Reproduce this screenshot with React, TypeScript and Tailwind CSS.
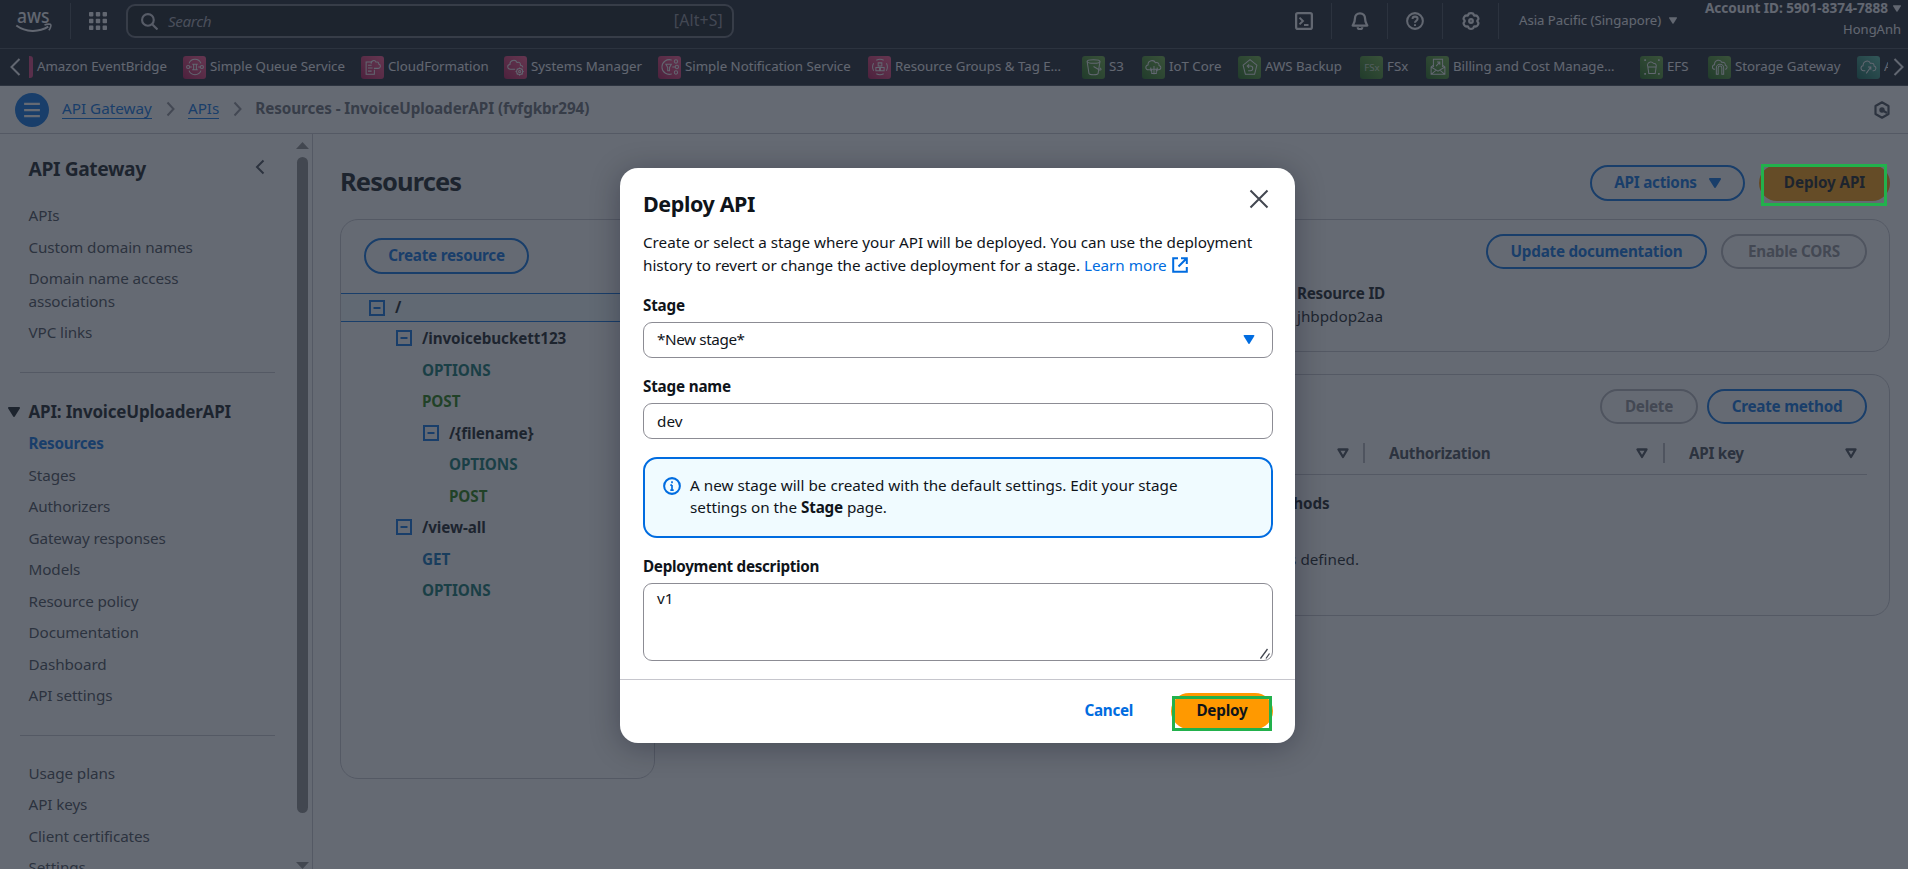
import type { ReactNode } from 'react'

type IconProps = { className: string; children: ReactNode; box?: string; width?: number }

function Icon({ className, children, box = '0 0 16 16', width = 2 }: IconProps) {
  return (
    <svg
      className={`shrink-0 ${className}`}
      viewBox={box}
      fill="none"
      stroke="currentColor"
      strokeWidth={width}
    >
      {children}
    </svg>
  )
}

function Caret({ className }: { className: string }) {
  return (
    <svg className={`shrink-0 ${className}`} viewBox="0 0 12 10" fill="currentColor">
      <path d="M1 0h10a1 1 0 0 1 .8 1.5l-5 8a1 1 0 0 1-1.6 0l-5-8A1 1 0 0 1 1 0Z" />
    </svg>
  )
}

function SortCaret() {
  return (
    <Icon className="h-[11px] w-3 text-[#424650]" box="0 0 12 11" width={2.3}>
      <path d="M1.5 1.500h9L6 9 1.500 1.500Z" strokeLinejoin="round" />
    </Icon>
  )
}

const pink = 'from-[#b0084d] to-[#ff4f8b]'
const green = 'from-[#1b660f] to-[#6cae3e]'
const teal = 'from-[#055f4e] to-[#56c0a7]'

type Service = { name: string; tint: string; width: string; glyph: ReactNode }

const services: Service[] = [
  {
    name: 'Simple Queue Service',
    tint: pink,
    width: 'w-[151px]',
    glyph: (
      <>
        <path d="M5.5 8a7 7 0 0 1 13 0M5.5 16a7 7 0 0 0 13 0" />
        <circle cx="4.5" cy="12" r="1.7" />
        <circle cx="19.5" cy="12" r="1.7" />
        <path d="M9 9h6M9 15h6M10.5 9v6M13.5 9v6M6.5 12h2M15.5 12h2" />
      </>
    ),
  },
  {
    name: 'CloudFormation',
    tint: pink,
    width: 'w-[116px]',
    glyph: (
      <>
        <path d="M11 6.500H4.500V20h9v-5M6.500 10h4M6.500 13h5M6.500 16.500h4" />
        <path d="M10 8.500c-.5-3.500 4-5 5.300-1.800 2.200-.9 3.200.7 2.900 2 2.800.8 2.300 4.800-.5 4.800H13" />
      </>
    ),
  },
  {
    name: 'Systems Manager',
    tint: pink,
    width: 'w-[127px]',
    glyph: (
      <>
        <path d="M11 14.500H6c-4 0-3.800-5-.6-5.200C5 4.500 11.500 3 13 7c3-1 4 1 3.800 3 1.600.2 2.500 1.200 2.800 2.500" />
        <circle cx="16" cy="17" r="3.300" />
        <circle cx="16" cy="17" r="1.200" />
        <path d="M16 12.500v1.200M16 20.300v1.200M11.500 17h1.200M19.300 17h1.200M12.900 13.900l.8.8M18.300 19.300l.8.8M19.100 13.900l-.8.8M13.700 19.300l-.8.8" />
      </>
    ),
  },
  {
    name: 'Simple Notification Service',
    tint: pink,
    width: 'w-[183px]',
    glyph: (
      <>
        <path d="M14 4.500a8 8 0 1 0 0 15M7.500 9h6l-2 3.500V16h-2v-3.500L7.500 9ZM14.500 12h3.500" />
        <circle cx="18.500" cy="6" r="1.800" />
        <circle cx="19.500" cy="12" r="1.800" />
        <circle cx="18.500" cy="18" r="1.800" />
      </>
    ),
  },
  {
    name: 'Resource Groups & Tag E…',
    tint: pink,
    width: 'w-[187px]',
    glyph: (
      <>
        <path d="M5 16a8.300 8.300 0 0 1 0-8M8 4.700a8.300 8.300 0 0 1 8 0M19 8a8.300 8.300 0 0 1 0 8M16 19.300a8.300 8.300 0 0 1-8 0" />
        <path d="M10 7.500h4v3.500h-4zM7.500 12.500h4V16h-4zM12.500 12.500h4V16h-4z" />
      </>
    ),
  },
  {
    name: 'S3',
    tint: green,
    width: 'w-[33px]',
    glyph: (
      <>
        <ellipse cx="11.500" cy="6" rx="7" ry="2" />
        <path d="M4.500 6 6.500 19c1 2 9 2 10 0l2-13M11.500 11.500l6 3.500c2.500.8 3-.5 1-2" />
      </>
    ),
  },
  {
    name: 'IoT Core',
    tint: green,
    width: 'w-[69px]',
    glyph: (
      <>
        <path d="M7.500 15H6c-4 0-3.500-5-.5-5.300C5.200 4.800 12 3.500 13.500 7.300c3-.8 4.200 1 4 3 3 .8 2.500 4.700-.5 4.700h-1" />
        <path d="M8.500 12.500v4M12 11v9M15.500 12.500v4M9.500 15v4h5v-4M7.500 14.500h9" />
      </>
    ),
  },
  {
    name: 'AWS Backup',
    tint: green,
    width: 'w-[95px]',
    glyph: (
      <>
        <path d="M7 20 4.500 10 12 4l7.500 6L17 20H7Z" />
        <path d="M9.500 11h3a2.500 2.500 0 0 1 0 5H10M11 9l-2 2 2 2" />
      </>
    ),
  },
  {
    name: 'FSx',
    tint: green,
    width: 'w-[39px]',
    glyph: (
      <text x="12" y="16" fontSize="10.500" textAnchor="middle" fill="currentColor" stroke="none" className="opacity-70">
        FSx
      </text>
    ),
  },
  {
    name: 'Billing and Cost Manage…',
    tint: green,
    width: 'w-[187px]',
    glyph: (
      <>
        <path d="M7 12V3.500h10V12M7 10l-2.500 2V20h15v-8L17 10M4.500 12l7.500 4.500 7.500-4.500M4.500 20l5.500-4.500M19.500 20 14 15.500" />
        <path d="m10 11 4-4.500M11 6.500h3v3" />
      </>
    ),
  },
  {
    name: 'EFS',
    tint: green,
    width: 'w-[41px]',
    glyph: (
      <>
        <path d="M7 9.500c1-3.500 5-4 6.500-1.500 3 0 3.500 2 3 3.500M7.500 12h9l-1 7h-7l-1-7ZM7 9.500l.5 2.500" />
        <path d="M3.500 4.500h2M18.500 4.500h2M3.500 19.500h2M18.500 19.500h2M4.500 3.500v2M19.500 3.500v2M4.500 18.500v2M19.500 18.500v2" />
      </>
    ),
  },
  {
    name: 'Storage Gateway',
    tint: green,
    width: 'w-[122px]',
    glyph: (
      <>
        <path d="M6.500 14.500c-3.500 0-3.500-4.500-.5-5C6 4 12.500 3 14 7c3-.6 4 1.300 3.800 3 2.700.6 2.500 4.500-.3 4.500" />
        <path d="M8 20v-7a4 4 0 0 1 8 0v7h-2v-7a2 2 0 0 0-4 0v7H8Z" />
      </>
    ),
  },
  {
    name: 'A',
    tint: teal,
    width: 'w-[4px]',
    glyph: (
      <>
        <path d="M8 16H6c-3.500 0-3.500-5-.5-5.300C5.500 5 12 4 13.500 8c3-.8 4.200 1 4 2.800 3 .7 2.500 5.200-.5 5.200h-1" />
        <path d="m9 19 5-7M11 12h3v3" />
      </>
    ),
  },
]

function TopBar() {
  return (
    <header className="flex h-[49px] shrink-0 items-start border-b border-[#424650] bg-[#161d26] text-[#f3f3f7]">
      <div className="mt-[3px] flex h-9 w-[71px] items-center border-r border-[#424650] pl-4">
        <svg className="h-[26px] w-9 overflow-visible" viewBox="0 0 36 26">
          <text x="1" y="15" fontSize="19.500" fontWeight="500" textLength="32.500" lengthAdjust="spacingAndGlyphs" fill="currentColor">
            aws
          </text>
          <path d="M.3 17.500c9.500 7 22.500 7 32 1.200" fill="none" stroke="currentColor" strokeWidth="2" />
          <path d="M28.500 17c3-1.200 6-1 6.300-.4.400.7-.3 3.700-2 5.700" fill="none" stroke="currentColor" strokeWidth="1.600" />
        </svg>
      </div>
      <svg className="ml-[18px] mt-3 size-[18px]" viewBox="0 0 18 18" fill="currentColor">
        {[0, 6.8, 13.6].map((y) =>
          [0, 6.8, 13.6].map((x) => <rect key={`${x}-${y}`} x={x} y={y} width="4.400" height="4.400" rx=".8" />),
        )}
      </svg>
      <div className="ml-[19px] mt-1 flex h-[34px] w-[608px] items-center rounded-[9px] border-2 border-[#656871] bg-[#0f141a] pl-[13px] pr-[9px] text-[#d0d0d6]">
        <Icon className="size-[17px]" width={2}>
          <circle cx="6.500" cy="6.500" r="5.500" />
          <path d="m10.500 10.500 5 5" />
        </Icon>
        <span className="ml-2.5 flex-1 text-[15.250px] italic tracking-[-0.4px] text-[#a4a4ad]">Search</span>
        <span className="text-[15.750px] tracking-[0.2px] text-[#8c8c94]">[Alt+S]</span>
      </div>
      <div className="ml-auto flex h-full">
        <div className="mt-[3px] flex h-9 w-14 items-center justify-center border-r border-[#424650]">
          <Icon className="size-[18px]">
            <rect x="1" y="1" width="14" height="14" rx="1.500" />
            <path d="m4 5 3 3-3 3M8 11.500h4" strokeWidth={1.8} />
          </Icon>
        </div>
        <div className="mt-[3px] flex h-9 w-14 items-center justify-center border-r border-[#424650]">
          <Icon className="size-[18px]">
            <path d="M8 1.200c-2.700 0-4.500 1.900-4.500 4.600C3.500 9 2.500 10 1.500 12h13c-1-2-2-3-2-6.200 0-2.700-1.800-4.600-4.500-4.600Z" strokeLinejoin="round" />
            <path d="M6 13.500a2 1.800 0 0 0 4 0" />
          </Icon>
        </div>
        <div className="mt-[3px] flex h-9 w-[55px] items-center justify-center border-r border-[#424650]">
          <Icon className="size-[18px]" width={1.8}>
            <circle cx="8" cy="8" r="7" />
            <path d="M5.800 6.300c0-3 4.500-2.800 4.500-.2C10.300 7.800 8 7.800 8 9.600M8 10.800v1.700" />
          </Icon>
        </div>
        <div className="mt-[3px] flex h-9 w-14 items-center justify-center border-r border-[#424650]">
          <Icon className="size-[18px]" width={2}>
            <path d="M5.700 2.300C6 .6 10 .6 10.300 2.300c.2.900.6 1.200 1.500.9 1.700-.6 3.600 2.700 2.300 3.800-.7.600-.7 1.400 0 2 1.300 1.100-.6 4.400-2.300 3.800-.9-.3-1.300 0-1.500.9-.3 1.700-4.300 1.700-4.600 0-.2-.9-.6-1.200-1.500-.9C2.500 13.400.6 10.100 1.900 9c.7-.6.700-1.400 0-2C.6 5.900 2.500 2.600 4.200 3.200c.9.300 1.300 0 1.500-.9Z" />
            <circle cx="8" cy="8" r="1.600" />
          </Icon>
        </div>
        <div className="flex h-[41px] items-center pl-5 text-[13.150px]">
          <span className="w-[142px] whitespace-nowrap">Asia Pacific (Singapore)</span>
          <Caret className="ml-2 h-[7px] w-2" />
        </div>
        <div className="ml-7 mr-[7px] flex flex-col items-end text-[13px]">
          <div className="mt-[-2px] flex h-5 items-center text-[13.550px] font-bold">
            <span className="w-[184px] whitespace-nowrap">Account ID: 5901-8374-7888</span>
            <Caret className="ml-1 h-[7px] w-2" />
          </div>
          <span className="mt-px h-5 leading-5">HongAnh</span>
        </div>
      </div>
    </header>
  )
}

function ServiceBar() {
  return (
    <nav className="flex h-[37px] shrink-0 items-center border-b border-[#424650] bg-[#161d26] text-[13.250px] text-[#f3f3f7]">
      <Icon className="ml-[7px] h-[18px] w-4" box="0 0 16 18">
        <path d="M12.500 1 4.500 9l8 8" />
      </Icon>
      <div className="ml-1.5 h-[22px] w-1 rounded-r-[3px] bg-[#d63a78]" />
      <span className="ml-1 w-[146px] shrink-0 whitespace-nowrap">Amazon EventBridge</span>
      <div className="flex min-w-0 flex-1">
        {services.map((s) => (
          <div key={s.name} className="flex shrink-0 items-center">
            <span className={`flex size-[23px] shrink-0 items-center justify-center rounded-[3px] bg-linear-to-tr ${s.tint}`}>
              <Icon className="size-[22px]" box="0 0 24 24" width={1.1}>
                {s.glyph}
              </Icon>
            </span>
            <span className={`ml-1 overflow-hidden whitespace-nowrap ${s.width}`}>{s.name}</span>
          </div>
        ))}
      </div>
      <Icon className="mr-0.5 h-[18px] w-3.5" box="0 0 14 18">
        <path d="m2.500 1 8 8-8 8" />
      </Icon>
    </nav>
  )
}

function Chevron() {
  return (
    <Icon className="h-4 w-2.5 text-[#8c8c94]" box="0 0 10 16">
      <path d="m1.500 1.500 6 6.500-6 6.500" />
    </Icon>
  )
}

function Breadcrumbs() {
  return (
    <div className="flex h-12 shrink-0 items-center border-b border-[#c6c6cd] bg-white pl-[15px] pr-[18px] text-[15.250px]">
      <div className="flex size-[34px] items-center justify-center rounded-full bg-[#006ce0] text-white">
        <Icon className="size-[18px]">
          <path d="M1 2.500h14M1 8h14M1 13.500h14" />
        </Icon>
      </div>
      <div className="mb-[3px] ml-[13px] flex items-center">
        <a className="mt-px border-b border-[#006ce0] leading-[19px] text-[#006ce0]">API Gateway</a>
        <span className="ml-3.5 mr-3 mt-px"><Chevron /></span>
        <a className="mt-px border-b border-[#006ce0] leading-[19px] text-[#006ce0]">APIs</a>
        <span className="ml-3.5 mr-3 mt-px"><Chevron /></span>
        <span className="font-bold tracking-[-0.1px] text-[#656871]">Resources - InvoiceUploaderAPI (fvfgkbr294)</span>
      </div>
      <Icon className="ml-auto h-[18px] w-4 text-[#424650]" box="0 0 16 18" width={2.2}>
        <path d="M8 1.300 14.500 5v8L8 16.700 1.500 13V5L8 1.300Z" strokeLinejoin="round" />
        <circle cx="8" cy="9" r="1.600" fill="currentColor" />
        <path d="m8 9 5 3" />
      </Icon>
    </div>
  )
}

const topLinks = ['APIs', 'Custom domain names', 'Domain name access associations', 'VPC links']
const apiLinks = ['Resources', 'Stages', 'Authorizers', 'Gateway responses', 'Models', 'Resource policy', 'Documentation', 'Dashboard', 'API settings']
const bottomLinks = ['Usage plans', 'API keys', 'Client certificates', 'Settings']

function LinkList({ items, active }: { items: string[]; active?: string }) {
  return (
    <ul className="flex flex-col gap-[9px] pl-[28.500px]">
      {items.map((item) => (
        <li
          key={item}
          className={`w-[190px] ${item === active ? 'font-bold tracking-[-0.250px] text-[#006ce0]' : 'tracking-[-0.1px] text-[#424650]'}`}
        >
          {item}
        </li>
      ))}
    </ul>
  )
}

function Sidebar() {
  return (
    <aside className="flex w-[313px] shrink-0 overflow-hidden border-r border-[#c6c6cd] bg-white text-[15.250px] leading-[22.500px]">
      <div className="w-[296px] shrink-0">
        <div className="mb-[21px] mt-[21px] flex h-7 items-center pl-[28.500px]">
          <h2 className="text-[19.250px] font-bold tracking-[-0.4px] text-[#0f141a]">API Gateway</h2>
          <Icon className="mb-1 ml-auto mr-[31px] h-4 w-2.5 text-[#424650]" box="0 0 10 16">
            <path d="M8.500 1.500 2 8l6.500 6.500" />
          </Icon>
        </div>
        <LinkList items={topLinks} />
        <hr className="ml-5 mt-7 w-[255px] border-[#c6c6cd]" />
        <div className="mb-[9px] mt-7 flex items-center text-[#0f141a]">
          <Caret className="ml-2 h-[10px] w-3" />
          <h3 className="ml-[8.500px] text-[17px] font-bold tracking-[-0.2px]">API: InvoiceUploaderAPI</h3>
        </div>
        <LinkList items={apiLinks} active="Resources" />
        <hr className="ml-5 mt-7 w-[255px] border-[#c6c6cd]" />
        <div className="mt-[26px]">
          <LinkList items={bottomLinks} />
        </div>
      </div>
      <div className="flex w-[13px] flex-col items-center pt-2 text-[#8b8b8b]">
        <svg className="h-[7px] w-[13px]" viewBox="0 0 13 7" fill="currentColor">
          <path d="M6.500 0 13 7H0Z" />
        </svg>
        <div className="mt-2 h-[656px] w-[11px] rounded-full bg-[#8b8b8b]" />
        <svg className="mt-[49px] h-[7px] w-[13px]" viewBox="0 0 13 7" fill="currentColor">
          <path d="M0 0h13L6.500 7Z" />
        </svg>
      </div>
    </aside>
  )
}

function Button({ children, className, disabled = false }: { children: ReactNode; className: string; disabled?: boolean }) {
  return (
    <button
      className={`flex items-center justify-center rounded-full border-2 pb-px font-bold tracking-[-0.250px] ${
        disabled ? 'border-[#b4b4bb] text-[#8c8c94]' : 'border-[#006ce0] text-[#006ce0]'
      } ${className}`}
    >
      {children}
    </button>
  )
}

type Row = { label: string; pad: string; color: string; open?: boolean }

const tree: Row[] = [
  { label: '/invoicebuckett123', pad: 'pl-[55px]', color: 'text-[#0f141a]', open: true },
  { label: 'OPTIONS', pad: 'pl-[81px]', color: 'text-[#067068]' },
  { label: 'POST', pad: 'pl-[81px]', color: 'text-[#1d7a02]' },
  { label: '/{filename}', pad: 'pl-[82px]', color: 'text-[#0f141a]', open: true },
  { label: 'OPTIONS', pad: 'pl-[108px]', color: 'text-[#067068]' },
  { label: 'POST', pad: 'pl-[108px]', color: 'text-[#1d7a02]' },
  { label: '/view-all', pad: 'pl-[55px]', color: 'text-[#0f141a]', open: true },
  { label: 'GET', pad: 'pl-[81px]', color: 'text-[#0069b4]' },
  { label: 'OPTIONS', pad: 'pl-[81px]', color: 'text-[#067068]' },
]

function Collapse() {
  return (
    <Icon className="mr-[10px] size-4 text-[#006ce0]">
      <rect x="1" y="1" width="14" height="14" />
      <path d="M4.500 8h7" />
    </Icon>
  )
}

function ResourceTree() {
  return (
    <section className="h-[560px] w-[315px] shrink-0 rounded-[18px] border border-[#c6c6cd] bg-white pt-[18px]">
      <Button className="ml-[23px] h-9 w-[165px]">Create resource</Button>
      <div className="mt-[19px] flex h-[29px] items-center border-y border-[#006ce0] bg-[#f0fbff] pl-7 font-bold">
        <Collapse />
        <span>/</span>
      </div>
      {tree.map((r, i) => (
        <div key={i} className={`flex h-[31.500px] items-center pt-px font-bold tracking-[-0.1px] ${r.pad} ${r.color}`}>
          {r.open && <Collapse />}
          <span>{r.label}</span>
        </div>
      ))}
    </section>
  )
}

const columns = [
  { label: '', size: 'flex-1 pr-[14px]' },
  { label: 'Authorization', size: 'w-[300px] border-l-2 pl-6 pr-[15px]' },
  { label: 'API key', size: 'w-[204px] border-l-2 pl-6 pr-[10px]' },
]

function Main() {
  return (
    <main className="flex-1 bg-white pl-[27px] pr-[18px] pt-[31px] text-[15.250px] leading-[22.500px] text-[#0f141a]">
      <div className="flex h-9 items-center">
        <h1 className="mb-1 text-[25.500px] font-bold tracking-[-0.9px]">Resources</h1>
        <Button className="ml-auto h-9 w-[155px]">
          API actions <Caret className="ml-3 h-[10px] w-3" />
        </Button>
        <button className="ml-3.5 h-9 w-[131px] rounded-full bg-[#ff9900] pb-px font-bold tracking-[-0.1px]">Deploy API</button>
      </div>
      <div className="mt-[18px] flex gap-[22px]">
        <ResourceTree />
        <div className="flex flex-1 flex-col gap-[22px]">
          <section className="h-[133px] rounded-[18px] border border-[#c6c6cd] bg-white px-[22px] pt-3.5">
            <div className="flex h-9 justify-end gap-3.5">
              <Button className="h-[35px] w-[221px]">Update documentation</Button>
              <Button className="h-[35px] w-[146px]" disabled>
                Enable CORS
              </Button>
            </div>
            <dl className="ml-[597px] mt-3">
              <dt className="font-bold tracking-[-0.250px]">Resource ID</dt>
              <dd>jhbpdop2aa</dd>
            </dl>
          </section>
          <section className="h-[242px] rounded-[18px] border border-[#c6c6cd] bg-white px-[22px] pt-3.5">
            <div className="flex h-9 justify-end gap-[9px]">
              <Button className="h-[35px] w-[98px]" disabled>
                Delete
              </Button>
              <Button className="h-[35px] w-40">Create method</Button>
            </div>
            <div className="flex h-[50px] items-center border-b border-[#c6c6cd] pt-[7px] text-[#424650]">
              {columns.map((c) => (
                <div key={c.label} className={`flex h-5 items-center justify-between border-[#b4b4bb] font-bold ${c.size}`}>
                  <span className="tracking-[-0.3px]">{c.label}</span>
                  <SortCaret />
                </div>
              ))}
            </div>
            <div className="mt-[17px] text-center">
              <p className="font-bold tracking-[-0.1px]">No methods</p>
              <p className="mt-[33px]">No methods defined.</p>
            </div>
          </section>
        </div>
      </div>
    </main>
  )
}

function DeployDialog() {
  return (
    <div
      role="dialog"
      className="absolute left-[620px] top-[168px] h-[575px] w-[675px] rounded-[18px] bg-white text-[15.250px] leading-[22.500px] text-[#0f141a] shadow-[0_4px_30px_rgba(0,7,22,0.3)]"
    >
      <div className="flex h-[511px] flex-col pl-[23px] pr-[22px]">
        <div className="flex justify-between pr-1">
          <h2 className="mt-[22px] text-[21.500px] font-bold leading-7 tracking-[-0.4px]">Deploy API</h2>
          <Icon className="mt-[21px] size-[20px] text-[#424650]" box="0 0 20 20">
            <path d="m1.500 1.500 17 17M18.500 1.500l-17 17" />
          </Icon>
        </div>
        <p className="mt-[13px] whitespace-nowrap tracking-[-0.02px]">
          Create or select a stage where your API will be deployed. You can use the deployment
          <br />
          history to revert or change the active deployment for a stage. <a className="text-[#006ce0]">Learn more</a>
          <Icon className="mb-0.5 ml-[5px] inline size-4 text-[#006ce0]">
            <path d="M6 1.200H1.200v13.600h13.600V10M9 1.200h5.800V7M14.500 1.500 6.500 9.500" />
          </Icon>
        </p>
        <label className="mt-[18px] font-bold tracking-[-0.2px]">Stage</label>
        <div className="mt-[5px] flex h-9 items-center justify-between rounded-[9px] border border-[#8c8c94] pl-[13px] pr-[17px]">
          <span className="tracking-[-0.4px]">*New stage*</span>
          <Caret className="h-[9px] w-3 text-[#006ce0]" />
        </div>
        <label className="mt-[17px] font-bold tracking-[-0.2px]">Stage name</label>
        <div className="mt-[6px] flex h-9 items-center rounded-[9px] border border-[#8c8c94] pl-[13px]">dev</div>
        <div className="mt-[18px] flex h-[81px] rounded-[14px] border-2 border-[#006ce0] bg-[#f0fbff] pl-[18px] pt-[15px]">
          <Icon className="mt-[3px] size-[18px] text-[#006ce0]" width={1.8}>
            <circle cx="8" cy="8" r="7" />
            <path d="M8 12V7.200M6.500 7.200H8M6.500 11.600h3M8 3.800v1.700" strokeWidth={1.500} />
          </Icon>
          <p className="ml-[9px] whitespace-nowrap leading-[22px]">
            A new stage will be created with the default settings. Edit your stage
            <br />
            settings on the <b className="tracking-[-0.2px]">Stage</b> page.
          </p>
        </div>
        <label className="mt-[17px] font-bold tracking-[-0.3px]">Deployment description</label>
        <div className="mt-[5px] flex h-[78px] justify-between rounded-[9px] border border-[#8c8c94] pl-[13px] pt-[3px]">
          <span>v1</span>
          <Icon className="mb-px mr-px size-[11px] self-end text-[#424650]" box="0 0 11 11" width={1.300}>
            <path d="M.5 10.500 7.500 1M6 10.500l3.500-5" />
          </Icon>
        </div>
      </div>
      <div className="flex h-16 items-center justify-end border-t border-[#c6c6cd] pb-0.5 pr-[22px] font-bold">
        <span className="mr-[38px] tracking-[-0.3px] text-[#006ce0]">Cancel</span>
        <button className="h-9 w-[102px] rounded-full bg-[#ff9900] tracking-[-0.2px]">Deploy</button>
      </div>
    </div>
  )
}

export default function App() {
  return (
    <div className="relative flex h-[869px] w-[1908px] flex-col overflow-hidden bg-white font-['Noto_Sans',sans-serif]">
      <TopBar />
      <ServiceBar />
      <Breadcrumbs />
      <div className="flex h-[735px]">
        <Sidebar />
        <Main />
      </div>
      <div className="absolute inset-0 bg-[rgba(35,43,55,0.7)]" />
      <DeployDialog />
      <div className="absolute left-[1761px] top-[164px] h-[42px] w-[126px] border-[3px] border-[#22b14c]" />
      <div className="absolute left-[1172px] top-[696px] h-[35px] w-[100px] border-[3px] border-[#22b14c]" />
    </div>
  )
}
